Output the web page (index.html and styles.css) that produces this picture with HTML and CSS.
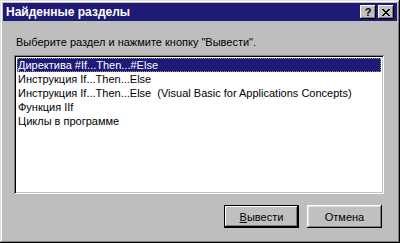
FILE: index.html
```html
<!DOCTYPE html>
<html lang="ru">
<head>
  <meta charset="UTF-8" />
  <title>Найденные разделы</title>
  <link rel="stylesheet" href="styles.css">
</head>
<body>
  <div class="window">
    <div class="titlebar">
      <span class="title">Найденные разделы</span>
      <div class="title-buttons">
        <button class="tb-btn help">?</button>
        <button class="tb-btn close">
          <svg width="8" height="7" viewBox="0 0 8 7"><path d="M0 0h2v1h1v1h2V1h1V0h2v1H7v1H6v1H5v1h1v1h1v1h1v1H6V6H5V5H3v1H2v1H0V6h1V5h1V4h1V3H2V2H1V1H0z" fill="#000"/></svg>
        </button>
      </div>
    </div>

    <div class="content">
      <p class="prompt">Выберите раздел и нажмите кнопку "Вывести".</p>

      <ul class="listbox">
        <li class="selected">Директива #If...Then...#Else</li>
        <li>Инструкция If...Then...Else</li>
        <li>Инструкция If...Then...Else&nbsp; (Visual Basic for Applications Concepts)</li>
        <li>Функция IIf</li>
        <li>Циклы в программе</li>
      </ul>

      <div class="buttons">
        <button class="btn default"><u>В</u>ывести</button>
        <button class="btn">Отмена</button>
      </div>
    </div>
  </div>
</body>
</html>
```

FILE: styles.css
```css
* { box-sizing: border-box; }
body {
  margin: 0;
  background: #c0c0c0;
  font-family: 'Liberation Sans', Arial, sans-serif;
  font-size: 11px;
  color: #000;
}
.window {
  width: 400px;
  height: 243px;
  padding: 3px;
  background: #bebebe;
  box-shadow: inset -1px -1px #000, inset 1px 1px #dfdfdf,
              inset -2px -2px #808080, inset 2px 2px #fff;
}
.titlebar {
  height: 18px;
  background: #1e1a76;
  display: flex;
  align-items: center;
  justify-content: space-between;
  padding: 0 3px 0 3px;
}
.title {
  color: #fff;
  font-weight: bold;
  font-size: 12px;
}
.title-buttons {
  display: flex;
  gap: 2px;
}
.tb-btn {
  width: 16px;
  height: 14px;
  padding: 0;
  border: none;
  background: #c0c0c0;
  display: flex;
  align-items: center;
  justify-content: center;
  font-family: 'Liberation Sans', Arial, sans-serif;
  font-weight: bold;
  font-size: 11px;
  box-shadow: inset -1px -1px #000, inset 1px 1px #fff,
              inset -2px -2px #808080;
}
.content {
  padding: 15px 13px 0 11px;
}
.prompt {
  margin: 0 0 6px 2px;
  line-height: 13px;
}
.listbox {
  list-style: none;
  margin: 0;
  height: 139px;
  padding: 3px 3px;
  background: #fff;
  box-shadow: inset 1px 1px #808080, inset -1px -1px #fff,
              inset 2px 2px #000, inset -2px -2px #c0c0c0;
}
.listbox li {
  height: 14px;
  line-height: 14px;
  padding-left: 1px;
  white-space: nowrap;
}
.listbox li.selected {
  background: #1e1a76;
  color: #fff;
  outline: 1px dotted #8c8ab8;
  outline-offset: -1px;
}
.buttons {
  display: flex;
  justify-content: flex-end;
  gap: 8px;
  margin-top: 11px;
  padding-right: 2px;
}
.btn {
  width: 75px;
  height: 23px;
  padding: 0;
  border: none;
  background: #c0c0c0;
  font-family: 'Liberation Sans', Arial, sans-serif;
  font-size: 11px;
  color: #000;
  box-shadow: inset -1px -1px #000, inset 1px 1px #fff,
              inset -2px -2px #808080, inset 2px 2px #dfdfdf;
}
.btn.default {
  box-shadow: inset 0 0 0 1px #000, inset -2px -2px #000, inset 2px 2px #fff,
              inset -3px -3px #808080;
}
```
